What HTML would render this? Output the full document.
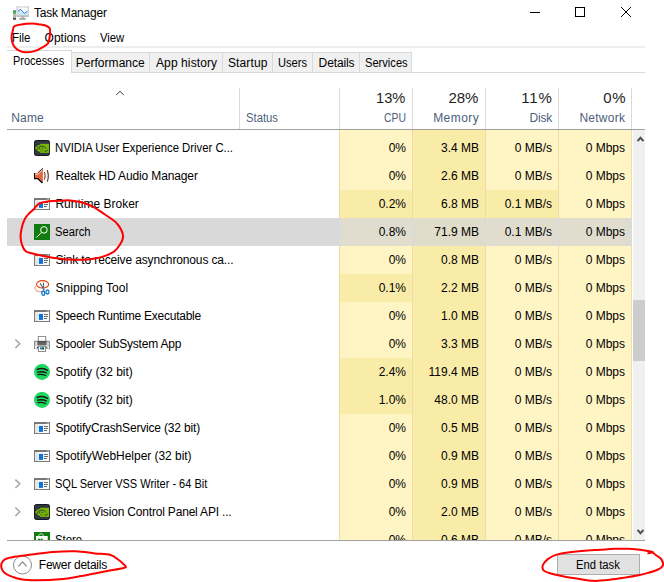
<!DOCTYPE html>
<html><head><meta charset="utf-8"><style>
html,body{margin:0;padding:0;}
body{width:664px;height:582px;position:relative;overflow:hidden;background:#fff;font-family:"Liberation Sans", sans-serif;}
.t{position:absolute;white-space:nowrap;}
</style></head><body>
<svg style="position:absolute;left:0;top:0" width="34" height="24" viewBox="0 0 34 24">
<rect x="13" y="10.4" width="3" height="9.4" fill="#b8b8b8"/><rect x="13" y="10.4" width="3" height="1.3" fill="#6a6a8a"/><rect x="13" y="11.8" width="3" height="1.6" fill="#22c022"/><rect x="13" y="17.8" width="3" height="2" fill="#5a5a5a"/>
<rect x="16.4" y="6" width="12.4" height="10.6" fill="#cdcdcd"/><rect x="16.4" y="6" width="12.4" height="1" fill="#e0e0e0"/><rect x="16.4" y="15.6" width="12.4" height="1" fill="#a8a8a8"/>
<rect x="17.8" y="7.5" width="9.6" height="7.6" fill="#fff"/>
<path d="M17.8 11.4L20.5 9.2L22.5 11.5L24.3 13.5L27.4 11.2V15.1H17.8Z" fill="#c6ecfc"/>
<path d="M17.8 11.4L20.5 9.2L22.5 11.5L24.3 13.5L27.4 11.2" fill="none" stroke="#1f7ac8" stroke-width="1"/>
<rect x="21.5" y="16.5" width="2.8" height="1.6" fill="#b0b0b0"/><rect x="19.2" y="18" width="6.6" height="1.8" fill="#a8a8a8"/>
</svg>
<div class="t" style="left:34.00px;top:5px;font-size:12px;line-height:16px;color:#000;letter-spacing:-0.227px;">Task Manager</div>
<div style="position:absolute;left:530px;top:12px;width:10px;height:1px;background:#000"></div>
<div style="position:absolute;left:575px;top:7px;width:10px;height:10px;box-sizing:border-box;border:1px solid #000"></div>
<svg style="position:absolute;left:620px;top:6px" width="12" height="12" viewBox="0 0 12 12"><path d="M1 1L11 11M11 1L1 11" stroke="#000" stroke-width="1"/></svg>
<div class="t" style="left:11.64px;top:30px;font-size:12px;line-height:16px;color:#000;transform:scaleX(0.9556);transform-origin:0 0;">File</div>
<div class="t" style="left:44.60px;top:30px;font-size:12px;line-height:16px;color:#000;letter-spacing:-0.017px;">Options</div>
<div class="t" style="left:100.40px;top:30px;font-size:12px;line-height:16px;color:#000;transform:scaleX(0.9385);transform-origin:0 0;">View</div>
<div style="position:absolute;left:7px;top:46px;width:638px;height:2px;background:#eeeeee"></div>
<div style="position:absolute;left:7px;top:72px;width:638px;height:1px;background:#d9d9d9"></div>
<div style="position:absolute;left:71px;top:52px;width:79px;height:21px;box-sizing:border-box;background:#f0f0f0;border:1px solid #d9d9d9"></div>
<div class="t" style="left:75.70px;top:55px;font-size:12px;line-height:16px;color:#000;letter-spacing:0.040px;">Performance</div>
<div style="position:absolute;left:149px;top:52px;width:74px;height:21px;box-sizing:border-box;background:#f0f0f0;border:1px solid #d9d9d9"></div>
<div class="t" style="left:156.00px;top:55px;font-size:12px;line-height:16px;color:#000;letter-spacing:0.100px;">App history</div>
<div style="position:absolute;left:222px;top:52px;width:51px;height:21px;box-sizing:border-box;background:#f0f0f0;border:1px solid #d9d9d9"></div>
<div class="t" style="left:228.00px;top:55px;font-size:12px;line-height:16px;color:#000;letter-spacing:0.117px;">Startup</div>
<div style="position:absolute;left:272px;top:52px;width:41px;height:21px;box-sizing:border-box;background:#f0f0f0;border:1px solid #d9d9d9"></div>
<div class="t" style="left:278.27px;top:55px;font-size:12px;line-height:16px;color:#000;transform:scaleX(0.9267);transform-origin:0 0;">Users</div>
<div style="position:absolute;left:312px;top:52px;width:48px;height:21px;box-sizing:border-box;background:#f0f0f0;border:1px solid #d9d9d9"></div>
<div class="t" style="left:318.60px;top:55px;font-size:12px;line-height:16px;color:#000;letter-spacing:-0.117px;">Details</div>
<div style="position:absolute;left:359px;top:52px;width:53px;height:21px;box-sizing:border-box;background:#f0f0f0;border:1px solid #d9d9d9"></div>
<div class="t" style="left:365.07px;top:55px;font-size:12px;line-height:16px;color:#000;transform:scaleX(0.9267);transform-origin:0 0;">Services</div>
<div style="position:absolute;left:7px;top:50px;width:65px;height:23px;box-sizing:border-box;background:#fff;border-top:1px solid #d9d9d9;border-right:1px solid #d9d9d9"></div>
<div class="t" style="left:12.59px;top:53px;font-size:12px;line-height:16px;color:#000;transform:scaleX(0.9136);transform-origin:0 0;">Processes</div>
<svg style="position:absolute;left:115px;top:90px" width="10" height="7" viewBox="0 0 10 7"><path d="M1.2 5L5 1.3L8.8 5" fill="none" stroke="#3c3c3c" stroke-width="1"/></svg>
<div class="t" style="left:11.20px;top:110px;font-size:12px;line-height:16px;color:#4c607a;letter-spacing:0.200px;">Name</div>
<div style="position:absolute;left:239px;top:88px;width:1px;height:41px;background:#dadada"></div>
<div style="position:absolute;left:339px;top:88px;width:1px;height:41px;background:#dadada"></div>
<div style="position:absolute;left:412px;top:88px;width:1px;height:41px;background:#dadada"></div>
<div style="position:absolute;left:485px;top:88px;width:1px;height:41px;background:#dadada"></div>
<div style="position:absolute;left:558px;top:88px;width:1px;height:41px;background:#dadada"></div>
<div style="position:absolute;left:631px;top:88px;width:1px;height:41px;background:#dadada"></div>
<div class="t" style="left:245.66px;top:110px;font-size:12px;line-height:16px;color:#4c607a;transform:scaleX(0.9394);transform-origin:0 0;">Status</div>
<div class="t" style="left:375.92px;top:88px;font-size:15px;line-height:19px;color:#1e1e1e;transform:scaleX(0.9759);transform-origin:0 0;">13%</div>
<div class="t" style="left:383.60px;top:110px;font-size:12px;line-height:16px;color:#4c607a;transform:scaleX(0.8640);transform-origin:0 0;">CPU</div>
<div class="t" style="left:448.60px;top:88px;font-size:15px;line-height:19px;color:#1e1e1e;letter-spacing:-0.100px;">28%</div>
<div class="t" style="left:433.20px;top:110px;font-size:12px;line-height:16px;color:#4c607a;letter-spacing:0.440px;">Memory</div>
<div class="t" style="left:521.20px;top:88px;font-size:15px;line-height:19px;color:#1e1e1e;letter-spacing:0.900px;">11%</div>
<div class="t" style="left:529.40px;top:110px;font-size:12px;line-height:16px;color:#4c607a;letter-spacing:-0.133px;">Disk</div>
<div class="t" style="left:603.20px;top:88px;font-size:15px;line-height:19px;color:#1e1e1e;letter-spacing:0.700px;">0%</div>
<div class="t" style="left:579.40px;top:110px;font-size:12px;line-height:16px;color:#4c607a;letter-spacing:0.250px;">Network</div>
<div style="position:absolute;left:7px;top:129px;width:638px;height:1px;background:#a0a0a0"></div>
<div style="position:absolute;left:0;top:130px;width:664px;height:410px;overflow:hidden">
<div style="position:absolute;left:339px;top:0px;width:73px;height:4px;background:#fff4c4"></div>
<div style="position:absolute;left:412px;top:0px;width:73px;height:4px;background:#f9eca8"></div>
<div style="position:absolute;left:485px;top:0px;width:73px;height:4px;background:#fff4c4"></div>
<div style="position:absolute;left:558px;top:0px;width:73px;height:4px;background:#fff4c4"></div>
<div style="position:absolute;left:339px;top:4px;width:73px;height:28px;background:#fff4c4"></div>
<div style="position:absolute;left:412px;top:4px;width:73px;height:28px;background:#f9eca8"></div>
<div style="position:absolute;left:485px;top:4px;width:73px;height:28px;background:#fff4c4"></div>
<div style="position:absolute;left:558px;top:4px;width:73px;height:28px;background:#fff4c4"></div>
<div style="position:absolute;left:339px;top:32px;width:73px;height:28px;background:#fff4c4"></div>
<div style="position:absolute;left:412px;top:32px;width:73px;height:28px;background:#f9eca8"></div>
<div style="position:absolute;left:485px;top:32px;width:73px;height:28px;background:#fff4c4"></div>
<div style="position:absolute;left:558px;top:32px;width:73px;height:28px;background:#fff4c4"></div>
<div style="position:absolute;left:339px;top:60px;width:73px;height:28px;background:#f9eca8"></div>
<div style="position:absolute;left:412px;top:60px;width:73px;height:28px;background:#f9eca8"></div>
<div style="position:absolute;left:485px;top:60px;width:73px;height:28px;background:#f9eca8"></div>
<div style="position:absolute;left:558px;top:60px;width:73px;height:28px;background:#fff4c4"></div>
<div style="position:absolute;left:7px;top:88px;width:624px;height:28px;background:#d9d9d9"></div>
<div style="position:absolute;left:339px;top:88px;width:73px;height:28px;background:#e0ddcf"></div>
<div style="position:absolute;left:412px;top:88px;width:73px;height:28px;background:#dfdcc9"></div>
<div style="position:absolute;left:485px;top:88px;width:73px;height:28px;background:#e0ddcf"></div>
<div style="position:absolute;left:558px;top:88px;width:73px;height:28px;background:#e0ddcf"></div>
<div style="position:absolute;left:339px;top:116px;width:73px;height:28px;background:#fff4c4"></div>
<div style="position:absolute;left:412px;top:116px;width:73px;height:28px;background:#f9eca8"></div>
<div style="position:absolute;left:485px;top:116px;width:73px;height:28px;background:#fff4c4"></div>
<div style="position:absolute;left:558px;top:116px;width:73px;height:28px;background:#fff4c4"></div>
<div style="position:absolute;left:339px;top:144px;width:73px;height:28px;background:#f9eca8"></div>
<div style="position:absolute;left:412px;top:144px;width:73px;height:28px;background:#f9eca8"></div>
<div style="position:absolute;left:485px;top:144px;width:73px;height:28px;background:#fff4c4"></div>
<div style="position:absolute;left:558px;top:144px;width:73px;height:28px;background:#fff4c4"></div>
<div style="position:absolute;left:339px;top:172px;width:73px;height:28px;background:#fff4c4"></div>
<div style="position:absolute;left:412px;top:172px;width:73px;height:28px;background:#f9eca8"></div>
<div style="position:absolute;left:485px;top:172px;width:73px;height:28px;background:#fff4c4"></div>
<div style="position:absolute;left:558px;top:172px;width:73px;height:28px;background:#fff4c4"></div>
<div style="position:absolute;left:339px;top:200px;width:73px;height:28px;background:#fff4c4"></div>
<div style="position:absolute;left:412px;top:200px;width:73px;height:28px;background:#f9eca8"></div>
<div style="position:absolute;left:485px;top:200px;width:73px;height:28px;background:#fff4c4"></div>
<div style="position:absolute;left:558px;top:200px;width:73px;height:28px;background:#fff4c4"></div>
<div style="position:absolute;left:339px;top:228px;width:73px;height:28px;background:#f9eca8"></div>
<div style="position:absolute;left:412px;top:228px;width:73px;height:28px;background:#f9eca8"></div>
<div style="position:absolute;left:485px;top:228px;width:73px;height:28px;background:#fff4c4"></div>
<div style="position:absolute;left:558px;top:228px;width:73px;height:28px;background:#fff4c4"></div>
<div style="position:absolute;left:339px;top:256px;width:73px;height:28px;background:#f9eca8"></div>
<div style="position:absolute;left:412px;top:256px;width:73px;height:28px;background:#f9eca8"></div>
<div style="position:absolute;left:485px;top:256px;width:73px;height:28px;background:#fff4c4"></div>
<div style="position:absolute;left:558px;top:256px;width:73px;height:28px;background:#fff4c4"></div>
<div style="position:absolute;left:339px;top:284px;width:73px;height:28px;background:#fff4c4"></div>
<div style="position:absolute;left:412px;top:284px;width:73px;height:28px;background:#f9eca8"></div>
<div style="position:absolute;left:485px;top:284px;width:73px;height:28px;background:#fff4c4"></div>
<div style="position:absolute;left:558px;top:284px;width:73px;height:28px;background:#fff4c4"></div>
<div style="position:absolute;left:339px;top:312px;width:73px;height:28px;background:#fff4c4"></div>
<div style="position:absolute;left:412px;top:312px;width:73px;height:28px;background:#f9eca8"></div>
<div style="position:absolute;left:485px;top:312px;width:73px;height:28px;background:#fff4c4"></div>
<div style="position:absolute;left:558px;top:312px;width:73px;height:28px;background:#fff4c4"></div>
<div style="position:absolute;left:339px;top:340px;width:73px;height:28px;background:#fff4c4"></div>
<div style="position:absolute;left:412px;top:340px;width:73px;height:28px;background:#f9eca8"></div>
<div style="position:absolute;left:485px;top:340px;width:73px;height:28px;background:#fff4c4"></div>
<div style="position:absolute;left:558px;top:340px;width:73px;height:28px;background:#fff4c4"></div>
<div style="position:absolute;left:339px;top:368px;width:73px;height:28px;background:#fff4c4"></div>
<div style="position:absolute;left:412px;top:368px;width:73px;height:28px;background:#f9eca8"></div>
<div style="position:absolute;left:485px;top:368px;width:73px;height:28px;background:#fff4c4"></div>
<div style="position:absolute;left:558px;top:368px;width:73px;height:28px;background:#fff4c4"></div>
<div style="position:absolute;left:339px;top:396px;width:73px;height:28px;background:#fff4c4"></div>
<div style="position:absolute;left:412px;top:396px;width:73px;height:28px;background:#f9eca8"></div>
<div style="position:absolute;left:485px;top:396px;width:73px;height:28px;background:#fff4c4"></div>
<div style="position:absolute;left:558px;top:396px;width:73px;height:28px;background:#fff4c4"></div>
<div style="position:absolute;left:339px;top:0;width:1px;height:410px;background:#efdca4"></div>
<div style="position:absolute;left:412px;top:0;width:1px;height:410px;background:#efdca4"></div>
<div style="position:absolute;left:485px;top:0;width:1px;height:410px;background:#efdca4"></div>
<div style="position:absolute;left:558px;top:0;width:1px;height:410px;background:#efdca4"></div>
<div style="position:absolute;left:631px;top:0;width:1px;height:410px;background:#efdca4"></div>
<div style="position:absolute;left:339px;top:88px;width:1px;height:28px;background:#d6dbe3"></div>
<div style="position:absolute;left:412px;top:88px;width:1px;height:28px;background:#d6dbe3"></div>
<div style="position:absolute;left:485px;top:88px;width:1px;height:28px;background:#d6dbe3"></div>
<div style="position:absolute;left:558px;top:88px;width:1px;height:28px;background:#d6dbe3"></div>
<div style="position:absolute;left:631px;top:88px;width:1px;height:28px;background:#d6dbe3"></div>
<svg style="position:absolute;left:34px;top:10px" width="16" height="16" viewBox="0 0 16 16"><rect x="0.5" y="0.5" width="15" height="15" rx="1.8" fill="#2f3541" stroke="#15181d"/><path d="M6.1 3.8H15.1V12.9H6.1Z" fill="#76b900"/><path d="M1 8C2.5 6 4 5 6.1 4.7V12C4 11.4 2.3 10 1 8Z" fill="#76b900"/><path d="M3.3 9.8C3 7.5 5 6.3 7.5 6.2C10 6.2 11.8 7.2 12 8.6" fill="none" stroke="#2f3541" stroke-width="0.9"/><path d="M5.4 7.6V9.3" stroke="#2f3541" stroke-width="0.9"/><path d="M7.6 8.3H9.3" stroke="#2f3541" stroke-width="0.9"/><path d="M10.8 11.3C12 11.2 13.2 10.8 13.8 10.1" fill="none" stroke="#2f3541" stroke-width="1"/><path d="M6 10.6C7.5 11.2 9 11 10 10.3" fill="none" stroke="#2f3541" stroke-width="0.6" opacity="0.6"/></svg>
<div class="t" style="left:55.46px;top:10px;font-size:12px;line-height:16px;color:#000;transform:scaleX(0.9433);transform-origin:0 0;">NVIDIA User Experience Driver C...</div>
<div class="t" style="right:258px;top:10px;font-size:12px;line-height:16px;color:#000;">0%</div>
<div class="t" style="right:185px;top:10px;font-size:12px;line-height:16px;color:#000;">3.4 MB</div>
<div class="t" style="right:112px;top:10px;font-size:12px;line-height:16px;color:#000;">0 MB/s</div>
<div class="t" style="right:39px;top:10px;font-size:12px;line-height:16px;color:#000;">0 Mbps</div>
<svg style="position:absolute;left:34px;top:38px" width="16" height="16" viewBox="0 0 16 16"><path d="M0.3 4.9H3.8L8.9 0.2V15L3.8 10.6H0.3Z" fill="#e8643c"/><path d="M0.3 4.9V10.6H3.8L8.4 15" fill="none" stroke="#000" stroke-width="1.3"/><path d="M3.8 4.9L8.9 0.2" fill="none" stroke="#222" stroke-width="0.9"/><path d="M1 6.3H4L8.2 2.2" fill="none" stroke="#fff" stroke-width="0.9" opacity="0.9"/><path d="M10.5 4.2Q11.8 7.9 10.5 11.6" fill="none" stroke="#5a2a1a" stroke-width="1"/><path d="M13.3 2.3Q15.3 8 13.3 13.6" fill="none" stroke="#5a2a1a" stroke-width="1.1"/></svg>
<div class="t" style="left:55.40px;top:38px;font-size:12px;line-height:16px;color:#000;letter-spacing:-0.126px;">Realtek HD Audio Manager</div>
<div class="t" style="right:258px;top:38px;font-size:12px;line-height:16px;color:#000;">0%</div>
<div class="t" style="right:185px;top:38px;font-size:12px;line-height:16px;color:#000;">2.6 MB</div>
<div class="t" style="right:112px;top:38px;font-size:12px;line-height:16px;color:#000;">0 MB/s</div>
<div class="t" style="right:39px;top:38px;font-size:12px;line-height:16px;color:#000;">0 Mbps</div>
<svg style="position:absolute;left:34px;top:66px" width="16" height="16" viewBox="0 0 16 16"><rect x="0.5" y="2.5" width="15" height="11" fill="#fafafa" stroke="#7c7c7c"/><rect x="0" y="2" width="16" height="2" fill="#787878"/><rect x="12.5" y="2.6" width="1" height="1" fill="#ddd"/><rect x="14" y="2.6" width="1" height="1" fill="#ddd"/><rect x="1" y="4" width="3.2" height="9" fill="#e6e6e6"/><rect x="4.9" y="5.9" width="4.1" height="6" fill="#0a74d8"/><rect x="10" y="6" width="4" height="1" fill="#6a6a6a"/><rect x="10" y="8" width="4" height="1" fill="#6a6a6a"/><rect x="10" y="10" width="3" height="1" fill="#6a6a6a"/></svg>
<div class="t" style="left:55.40px;top:66px;font-size:12px;line-height:16px;color:#000;letter-spacing:0.008px;">Runtime Broker</div>
<div class="t" style="right:258px;top:66px;font-size:12px;line-height:16px;color:#000;">0.2%</div>
<div class="t" style="right:185px;top:66px;font-size:12px;line-height:16px;color:#000;">6.8 MB</div>
<div class="t" style="right:112px;top:66px;font-size:12px;line-height:16px;color:#000;">0.1 MB/s</div>
<div class="t" style="right:39px;top:66px;font-size:12px;line-height:16px;color:#000;">0 Mbps</div>
<svg style="position:absolute;left:34px;top:94px" width="16" height="16" viewBox="0 0 16 16"><rect x="-0.5" y="-0.5" width="17" height="17" fill="#ece4ec"/><rect x="0" y="0" width="16" height="16" fill="#107c10"/><circle cx="9.9" cy="5.9" r="3.3" fill="none" stroke="#fff" stroke-width="1"/><path d="M7.3 8.6L2.3 13.6" stroke="#fff" stroke-width="1"/></svg>
<div class="t" style="left:55.47px;top:94px;font-size:12px;line-height:16px;color:#000;transform:scaleX(0.9333);transform-origin:0 0;">Search</div>
<div class="t" style="right:258px;top:94px;font-size:12px;line-height:16px;color:#000;">0.8%</div>
<div class="t" style="right:185px;top:94px;font-size:12px;line-height:16px;color:#000;">71.9 MB</div>
<div class="t" style="right:112px;top:94px;font-size:12px;line-height:16px;color:#000;">0.1 MB/s</div>
<div class="t" style="right:39px;top:94px;font-size:12px;line-height:16px;color:#000;">0 Mbps</div>
<svg style="position:absolute;left:34px;top:122px" width="16" height="16" viewBox="0 0 16 16"><rect x="0.5" y="2.5" width="15" height="11" fill="#fafafa" stroke="#7c7c7c"/><rect x="0" y="2" width="16" height="2" fill="#787878"/><rect x="12.5" y="2.6" width="1" height="1" fill="#ddd"/><rect x="14" y="2.6" width="1" height="1" fill="#ddd"/><rect x="1" y="4" width="3.2" height="9" fill="#e6e6e6"/><rect x="4.9" y="5.9" width="4.1" height="6" fill="#0a74d8"/><rect x="10" y="6" width="4" height="1" fill="#6a6a6a"/><rect x="10" y="8" width="4" height="1" fill="#6a6a6a"/><rect x="10" y="10" width="3" height="1" fill="#6a6a6a"/></svg>
<div class="t" style="left:55.40px;top:122px;font-size:12px;line-height:16px;color:#000;letter-spacing:-0.139px;">Sink to receive asynchronous ca...</div>
<div class="t" style="right:258px;top:122px;font-size:12px;line-height:16px;color:#000;">0%</div>
<div class="t" style="right:185px;top:122px;font-size:12px;line-height:16px;color:#000;">0.8 MB</div>
<div class="t" style="right:112px;top:122px;font-size:12px;line-height:16px;color:#000;">0 MB/s</div>
<div class="t" style="right:39px;top:122px;font-size:12px;line-height:16px;color:#000;">0 Mbps</div>
<svg style="position:absolute;left:34px;top:150px" width="16" height="16" viewBox="0 0 16 16"><ellipse cx="8.6" cy="4.3" rx="6.1" ry="3.7" fill="none" stroke="#d84315" stroke-width="1.1"/><path d="M2.6 5.2C0.6 6.8 0.4 9.5 2.8 10.8C4.5 11.7 6.5 11.9 8.5 11.8" fill="none" stroke="#e57355" stroke-width="0.9"/><path d="M6.1 3.2L10.3 10" stroke="#555" stroke-width="1.1"/><path d="M9.5 2.5L9.6 10" stroke="#666" stroke-width="1.1"/><ellipse cx="9.3" cy="13.2" rx="1.5" ry="2.2" fill="none" stroke="#0b7dd0" stroke-width="1.3"/><ellipse cx="13.5" cy="12" rx="1.5" ry="2" fill="none" stroke="#0b7dd0" stroke-width="1.3"/></svg>
<div class="t" style="left:55.40px;top:150px;font-size:12px;line-height:16px;color:#000;letter-spacing:0.083px;">Snipping Tool</div>
<div class="t" style="right:258px;top:150px;font-size:12px;line-height:16px;color:#000;">0.1%</div>
<div class="t" style="right:185px;top:150px;font-size:12px;line-height:16px;color:#000;">2.2 MB</div>
<div class="t" style="right:112px;top:150px;font-size:12px;line-height:16px;color:#000;">0 MB/s</div>
<div class="t" style="right:39px;top:150px;font-size:12px;line-height:16px;color:#000;">0 Mbps</div>
<svg style="position:absolute;left:34px;top:178px" width="16" height="16" viewBox="0 0 16 16"><rect x="0.5" y="2.5" width="15" height="11" fill="#fafafa" stroke="#7c7c7c"/><rect x="0" y="2" width="16" height="2" fill="#787878"/><rect x="12.5" y="2.6" width="1" height="1" fill="#ddd"/><rect x="14" y="2.6" width="1" height="1" fill="#ddd"/><rect x="1" y="4" width="3.2" height="9" fill="#e6e6e6"/><rect x="4.9" y="5.9" width="4.1" height="6" fill="#0a74d8"/><rect x="10" y="6" width="4" height="1" fill="#6a6a6a"/><rect x="10" y="8" width="4" height="1" fill="#6a6a6a"/><rect x="10" y="10" width="3" height="1" fill="#6a6a6a"/></svg>
<div class="t" style="left:55.40px;top:178px;font-size:12px;line-height:16px;color:#000;letter-spacing:-0.233px;">Speech Runtime Executable</div>
<div class="t" style="right:258px;top:178px;font-size:12px;line-height:16px;color:#000;">0%</div>
<div class="t" style="right:185px;top:178px;font-size:12px;line-height:16px;color:#000;">1.0 MB</div>
<div class="t" style="right:112px;top:178px;font-size:12px;line-height:16px;color:#000;">0 MB/s</div>
<div class="t" style="right:39px;top:178px;font-size:12px;line-height:16px;color:#000;">0 Mbps</div>
<svg style="position:absolute;left:14px;top:209px" width="8" height="10" viewBox="0 0 8 10"><path d="M1.4 0.6L5.8 4.8L1.4 9" fill="none" stroke="#a6a6a6" stroke-width="1.5"/></svg>
<svg style="position:absolute;left:34px;top:206px" width="16" height="16" viewBox="0 0 16 16"><rect x="4.3" y="0.4" width="7.4" height="5" fill="#fff" stroke="#8a8a8a"/><rect x="0.5" y="5.3" width="15" height="7.3" fill="#cfd3da" stroke="#8a8a8a"/><rect x="3.5" y="5" width="9" height="4.6" fill="#666"/><rect x="3.5" y="5" width="9" height="1.5" fill="#555"/><rect x="1" y="9.5" width="14" height="1" fill="#dde1e8"/><rect x="1" y="10.5" width="14" height="2" fill="#fff"/><rect x="3" y="10.8" width="1" height="1.4" fill="#222"/><rect x="12.3" y="10.8" width="1" height="1.4" fill="#222"/><rect x="13.8" y="9" width="1.2" height="1" fill="#7fd87f"/><rect x="4.4" y="10.4" width="7.2" height="5.1" fill="#fff" stroke="#8a8a8a"/><rect x="6" y="11.3" width="2" height="2.2" fill="#1a8ad8"/><rect x="8" y="11.3" width="2.2" height="2.2" fill="#1a5a3a"/></svg>
<div class="t" style="left:55.40px;top:206px;font-size:12px;line-height:16px;color:#000;letter-spacing:-0.205px;">Spooler SubSystem App</div>
<div class="t" style="right:258px;top:206px;font-size:12px;line-height:16px;color:#000;">0%</div>
<div class="t" style="right:185px;top:206px;font-size:12px;line-height:16px;color:#000;">3.3 MB</div>
<div class="t" style="right:112px;top:206px;font-size:12px;line-height:16px;color:#000;">0 MB/s</div>
<div class="t" style="right:39px;top:206px;font-size:12px;line-height:16px;color:#000;">0 Mbps</div>
<svg style="position:absolute;left:34px;top:234px" width="16" height="16" viewBox="0 0 16 16"><circle cx="8" cy="7.9" r="8" fill="#1ed760"/><path d="M3.2 5.4C6.5 4.3 10.8 4.6 13.4 6.3" fill="none" stroke="#191414" stroke-width="1.5" stroke-linecap="round"/><path d="M3.6 8.2C6.5 7.5 10 7.8 12.5 9" fill="none" stroke="#191414" stroke-width="1.3" stroke-linecap="round"/><path d="M3.8 10.6C6.4 10.2 9.2 10.5 11.6 11.5" fill="none" stroke="#191414" stroke-width="1.1" stroke-linecap="round"/></svg>
<div class="t" style="left:55.40px;top:234px;font-size:12px;line-height:16px;color:#000;letter-spacing:0.007px;">Spotify (32 bit)</div>
<div class="t" style="right:258px;top:234px;font-size:12px;line-height:16px;color:#000;">2.4%</div>
<div class="t" style="right:185px;top:234px;font-size:12px;line-height:16px;color:#000;">119.4 MB</div>
<div class="t" style="right:112px;top:234px;font-size:12px;line-height:16px;color:#000;">0 MB/s</div>
<div class="t" style="right:39px;top:234px;font-size:12px;line-height:16px;color:#000;">0 Mbps</div>
<svg style="position:absolute;left:34px;top:262px" width="16" height="16" viewBox="0 0 16 16"><circle cx="8" cy="7.9" r="8" fill="#1ed760"/><path d="M3.2 5.4C6.5 4.3 10.8 4.6 13.4 6.3" fill="none" stroke="#191414" stroke-width="1.5" stroke-linecap="round"/><path d="M3.6 8.2C6.5 7.5 10 7.8 12.5 9" fill="none" stroke="#191414" stroke-width="1.3" stroke-linecap="round"/><path d="M3.8 10.6C6.4 10.2 9.2 10.5 11.6 11.5" fill="none" stroke="#191414" stroke-width="1.1" stroke-linecap="round"/></svg>
<div class="t" style="left:55.40px;top:262px;font-size:12px;line-height:16px;color:#000;letter-spacing:0.007px;">Spotify (32 bit)</div>
<div class="t" style="right:258px;top:262px;font-size:12px;line-height:16px;color:#000;">1.0%</div>
<div class="t" style="right:185px;top:262px;font-size:12px;line-height:16px;color:#000;">48.0 MB</div>
<div class="t" style="right:112px;top:262px;font-size:12px;line-height:16px;color:#000;">0 MB/s</div>
<div class="t" style="right:39px;top:262px;font-size:12px;line-height:16px;color:#000;">0 Mbps</div>
<svg style="position:absolute;left:34px;top:290px" width="16" height="16" viewBox="0 0 16 16"><rect x="0.5" y="2.5" width="15" height="11" fill="#fafafa" stroke="#7c7c7c"/><rect x="0" y="2" width="16" height="2" fill="#787878"/><rect x="12.5" y="2.6" width="1" height="1" fill="#ddd"/><rect x="14" y="2.6" width="1" height="1" fill="#ddd"/><rect x="1" y="4" width="3.2" height="9" fill="#e6e6e6"/><rect x="4.9" y="5.9" width="4.1" height="6" fill="#0a74d8"/><rect x="10" y="6" width="4" height="1" fill="#6a6a6a"/><rect x="10" y="8" width="4" height="1" fill="#6a6a6a"/><rect x="10" y="10" width="3" height="1" fill="#6a6a6a"/></svg>
<div class="t" style="left:55.40px;top:290px;font-size:12px;line-height:16px;color:#000;letter-spacing:-0.170px;">SpotifyCrashService (32 bit)</div>
<div class="t" style="right:258px;top:290px;font-size:12px;line-height:16px;color:#000;">0%</div>
<div class="t" style="right:185px;top:290px;font-size:12px;line-height:16px;color:#000;">0.5 MB</div>
<div class="t" style="right:112px;top:290px;font-size:12px;line-height:16px;color:#000;">0 MB/s</div>
<div class="t" style="right:39px;top:290px;font-size:12px;line-height:16px;color:#000;">0 Mbps</div>
<svg style="position:absolute;left:34px;top:318px" width="16" height="16" viewBox="0 0 16 16"><rect x="0.5" y="2.5" width="15" height="11" fill="#fafafa" stroke="#7c7c7c"/><rect x="0" y="2" width="16" height="2" fill="#787878"/><rect x="12.5" y="2.6" width="1" height="1" fill="#ddd"/><rect x="14" y="2.6" width="1" height="1" fill="#ddd"/><rect x="1" y="4" width="3.2" height="9" fill="#e6e6e6"/><rect x="4.9" y="5.9" width="4.1" height="6" fill="#0a74d8"/><rect x="10" y="6" width="4" height="1" fill="#6a6a6a"/><rect x="10" y="8" width="4" height="1" fill="#6a6a6a"/><rect x="10" y="10" width="3" height="1" fill="#6a6a6a"/></svg>
<div class="t" style="left:55.40px;top:318px;font-size:12px;line-height:16px;color:#000;letter-spacing:-0.042px;">SpotifyWebHelper (32 bit)</div>
<div class="t" style="right:258px;top:318px;font-size:12px;line-height:16px;color:#000;">0%</div>
<div class="t" style="right:185px;top:318px;font-size:12px;line-height:16px;color:#000;">0.9 MB</div>
<div class="t" style="right:112px;top:318px;font-size:12px;line-height:16px;color:#000;">0 MB/s</div>
<div class="t" style="right:39px;top:318px;font-size:12px;line-height:16px;color:#000;">0 Mbps</div>
<svg style="position:absolute;left:14px;top:349px" width="8" height="10" viewBox="0 0 8 10"><path d="M1.4 0.6L5.8 4.8L1.4 9" fill="none" stroke="#a6a6a6" stroke-width="1.5"/></svg>
<svg style="position:absolute;left:34px;top:346px" width="16" height="16" viewBox="0 0 16 16"><rect x="0.5" y="2.5" width="15" height="11" fill="#fafafa" stroke="#7c7c7c"/><rect x="0" y="2" width="16" height="2" fill="#787878"/><rect x="12.5" y="2.6" width="1" height="1" fill="#ddd"/><rect x="14" y="2.6" width="1" height="1" fill="#ddd"/><rect x="1" y="4" width="3.2" height="9" fill="#e6e6e6"/><rect x="4.9" y="5.9" width="4.1" height="6" fill="#0a74d8"/><rect x="10" y="6" width="4" height="1" fill="#6a6a6a"/><rect x="10" y="8" width="4" height="1" fill="#6a6a6a"/><rect x="10" y="10" width="3" height="1" fill="#6a6a6a"/></svg>
<div class="t" style="left:55.48px;top:346px;font-size:12px;line-height:16px;color:#000;transform:scaleX(0.9169);transform-origin:0 0;">SQL Server VSS Writer - 64 Bit</div>
<div class="t" style="right:258px;top:346px;font-size:12px;line-height:16px;color:#000;">0%</div>
<div class="t" style="right:185px;top:346px;font-size:12px;line-height:16px;color:#000;">0.9 MB</div>
<div class="t" style="right:112px;top:346px;font-size:12px;line-height:16px;color:#000;">0 MB/s</div>
<div class="t" style="right:39px;top:346px;font-size:12px;line-height:16px;color:#000;">0 Mbps</div>
<svg style="position:absolute;left:14px;top:377px" width="8" height="10" viewBox="0 0 8 10"><path d="M1.4 0.6L5.8 4.8L1.4 9" fill="none" stroke="#a6a6a6" stroke-width="1.5"/></svg>
<svg style="position:absolute;left:34px;top:374px" width="16" height="16" viewBox="0 0 16 16"><rect x="0.5" y="0.5" width="15" height="15" rx="1.8" fill="#2f3541" stroke="#15181d"/><path d="M6.1 3.8H15.1V12.9H6.1Z" fill="#76b900"/><path d="M1 8C2.5 6 4 5 6.1 4.7V12C4 11.4 2.3 10 1 8Z" fill="#76b900"/><path d="M3.3 9.8C3 7.5 5 6.3 7.5 6.2C10 6.2 11.8 7.2 12 8.6" fill="none" stroke="#2f3541" stroke-width="0.9"/><path d="M5.4 7.6V9.3" stroke="#2f3541" stroke-width="0.9"/><path d="M7.6 8.3H9.3" stroke="#2f3541" stroke-width="0.9"/><path d="M10.8 11.3C12 11.2 13.2 10.8 13.8 10.1" fill="none" stroke="#2f3541" stroke-width="1"/><path d="M6 10.6C7.5 11.2 9 11 10 10.3" fill="none" stroke="#2f3541" stroke-width="0.6" opacity="0.6"/></svg>
<div class="t" style="left:55.40px;top:374px;font-size:12px;line-height:16px;color:#000;letter-spacing:-0.185px;">Stereo Vision Control Panel API ...</div>
<div class="t" style="right:258px;top:374px;font-size:12px;line-height:16px;color:#000;">0%</div>
<div class="t" style="right:185px;top:374px;font-size:12px;line-height:16px;color:#000;">2.0 MB</div>
<div class="t" style="right:112px;top:374px;font-size:12px;line-height:16px;color:#000;">0 MB/s</div>
<div class="t" style="right:39px;top:374px;font-size:12px;line-height:16px;color:#000;">0 Mbps</div>
<svg style="position:absolute;left:34px;top:402px" width="16" height="16" viewBox="0 0 16 16"><rect x="0" y="0" width="16" height="16" fill="#107c10"/><rect x="2" y="4" width="11.7" height="10" fill="#fff"/><path d="M4.5 4.2C4.5 1 9.5 1 9.5 4.2" fill="none" stroke="#cfe5cf" stroke-width="1"/><rect x="4" y="6.7" width="2.2" height="2" fill="#107c10"/><rect x="6.6" y="6.7" width="2.2" height="2" fill="#107c10"/></svg>
<div class="t" style="left:55.45px;top:402px;font-size:12px;line-height:16px;color:#000;transform:scaleX(0.9481);transform-origin:0 0;">Store</div>
<div class="t" style="right:258px;top:402px;font-size:12px;line-height:16px;color:#000;">0%</div>
<div class="t" style="right:185px;top:402px;font-size:12px;line-height:16px;color:#000;">0.6 MB</div>
<div class="t" style="right:112px;top:402px;font-size:12px;line-height:16px;color:#000;">0 MB/s</div>
<div class="t" style="right:39px;top:402px;font-size:12px;line-height:16px;color:#000;">0 Mbps</div>
<div style="position:absolute;left:632px;top:0;width:1px;height:410px;background:#fff"></div>
<div style="position:absolute;left:633px;top:0;width:12px;height:410px;background:#f0f0f0"></div>
<div style="position:absolute;left:633px;top:170px;width:12px;height:61px;background:#cdcdcd"></div>
<svg style="position:absolute;left:633px;top:4px" width="12" height="10" viewBox="0 0 12 10"><path d="M4.5 7.2L7.5 3.8L10.5 7.2" fill="none" stroke="#505050" stroke-width="2"/></svg>
<svg style="position:absolute;left:633px;top:397px" width="12" height="10" viewBox="0 0 12 10"><path d="M4.5 2.8L7.5 6.2L10.5 2.8" fill="none" stroke="#505050" stroke-width="2"/></svg>
</div>
<div style="position:absolute;left:7px;top:540px;width:638px;height:1px;background:#a0a0a0"></div>
<svg style="position:absolute;left:12px;top:555px" width="21" height="20" viewBox="0 0 21 20"><circle cx="10.5" cy="10" r="9" fill="none" stroke="#8c8c8c" stroke-width="1"/><path d="M6.4 11.4L10.5 6.9L14.6 11.4" fill="none" stroke="#8c8c8c" stroke-width="1.3"/></svg>
<div class="t" style="left:38.80px;top:557px;font-size:12px;line-height:16px;color:#000;letter-spacing:-0.250px;">Fewer details</div>
<div style="position:absolute;left:557px;top:554px;width:83px;height:21px;box-sizing:border-box;background:#e1e1e1;border:1px solid #adadad"></div>
<div class="t" style="left:575.76px;top:557px;font-size:12px;line-height:16px;color:#000;transform:scaleX(0.9370);transform-origin:0 0;">End task</div>
<svg style="position:absolute;left:0;top:0" width="664" height="582" viewBox="0 0 664 582"><g fill="none" stroke="#ff0000" stroke-width="2" stroke-linecap="round" stroke-linejoin="round">
<path d="M14.3 26.3C15.7 25.2 18.1 24.8 21.1 24.4C24.1 23.9 29.3 23.6 32.4 23.6C35.5 23.6 37.7 24.1 39.9 24.4C42.1 24.7 43.9 24.9 45.5 25.5C47.1 26.1 49.0 26.9 49.7 28.2C50.5 29.5 50.1 31.3 50.0 33.1C49.9 34.9 49.7 37.4 49.3 39.1C48.9 40.9 49.0 42.2 47.8 43.6C46.6 45.0 44.3 46.5 42.1 47.7C39.9 49.0 37.5 50.3 34.6 51.1C31.7 51.9 27.4 52.4 24.8 52.3C22.2 52.2 20.6 51.3 18.8 50.4C17.1 49.5 15.4 48.1 14.3 46.6C13.2 45.1 12.4 43.0 12.0 41.3C11.6 39.5 11.5 37.9 11.6 36.1C11.7 34.4 12.4 32.4 12.8 30.8C13.2 29.2 12.9 27.4 14.3 26.3Z"/>
<path d="M49.0 201.2C52.5 200.8 57.2 200.9 60.7 200.8C64.2 200.7 66.5 200.2 70.0 200.4C73.5 200.6 77.8 201.1 81.7 202.2C85.6 203.3 89.6 204.9 93.3 206.8C97.0 208.7 101.0 211.9 103.9 213.8C106.8 215.8 108.8 216.9 110.9 218.5C113.0 220.1 115.0 221.2 116.7 223.2C118.5 225.1 120.3 227.9 121.4 230.2C122.5 232.5 123.3 234.9 123.1 237.2C122.9 239.5 121.7 241.9 120.2 244.2C118.8 246.5 116.9 249.2 114.4 251.2C111.9 253.1 108.5 254.6 105.0 255.9C101.5 257.2 97.2 258.2 93.3 258.8C89.4 259.4 85.6 259.7 81.7 259.8C77.8 259.9 73.5 259.8 70.0 259.6C66.5 259.4 65.2 259.4 60.7 258.8C56.2 258.2 47.9 256.8 43.2 255.9C38.5 255.0 35.6 254.3 32.7 253.5C29.8 252.7 27.4 252.5 25.7 251.2C23.9 249.8 23.0 247.7 22.2 245.4C21.4 243.1 20.7 240.3 20.6 237.5C20.5 234.7 20.9 231.6 21.6 228.5C22.3 225.4 23.5 221.5 24.8 219.0C26.1 216.5 27.7 214.9 29.2 213.3C30.7 211.7 32.7 210.3 33.8 209.2C34.9 208.1 34.6 207.8 35.6 206.8C36.6 205.8 37.5 204.2 39.7 203.3C41.9 202.4 45.5 201.6 49.0 201.2Z"/>
<path d="M1.6 563.4C2.2 561.9 2.9 560.3 5.3 559.2C7.7 558.1 11.4 557.4 15.8 556.6C20.2 555.8 25.4 555.3 31.6 554.5C37.8 553.7 45.3 552.4 52.7 551.9C60.1 551.4 68.8 551.0 75.8 551.3C82.8 551.5 89.0 552.8 94.8 553.4C100.6 554.0 106.6 553.9 110.6 555.0C114.6 556.1 116.9 558.8 119.0 560.3C121.1 561.8 122.1 562.9 123.3 564.0C124.5 565.1 126.4 566.3 125.9 567.1C125.4 567.9 124.0 567.9 120.1 568.7C116.1 569.5 108.7 570.7 102.2 571.9C95.7 573.1 88.1 574.9 81.1 576.1C74.1 577.3 67.4 578.6 60.0 579.3C52.6 580.0 43.4 580.3 36.9 580.3C30.4 580.3 25.4 580.0 21.0 579.3C16.6 578.6 13.3 577.2 10.5 576.1C7.7 575.0 5.7 573.7 4.2 572.4C2.7 571.1 2.0 569.7 1.6 568.2C1.2 566.7 1.0 564.9 1.6 563.4Z"/>
<path d="M542.5 567.9C542.3 566.9 542.5 566.0 543.0 564.9C543.5 563.8 544.5 562.5 545.5 561.4C546.5 560.3 547.2 559.5 548.9 558.4C550.6 557.3 552.8 555.9 555.9 554.9C559.0 553.9 562.5 553.1 567.8 552.4C573.1 551.7 582.3 550.9 587.7 550.5C593.1 550.1 595.5 550.1 600.0 549.8C604.5 549.5 609.7 549.0 614.5 548.8C619.3 548.6 624.6 548.6 628.9 548.8C633.2 549.0 636.8 549.3 640.5 549.8C644.2 550.3 648.5 550.8 651.1 551.7C653.7 552.6 654.3 554.0 655.9 555.1C657.5 556.2 659.5 557.1 660.7 558.5C661.9 559.9 662.9 561.9 663.1 563.3C663.3 564.7 662.7 566.0 661.7 567.1C660.7 568.2 659.1 569.0 656.9 570.0C654.6 571.0 651.2 572.0 648.2 572.9C645.2 573.8 642.6 574.5 638.6 575.3C634.6 576.1 628.9 577.0 624.1 577.7C619.3 578.4 613.6 579.2 609.6 579.7C605.6 580.2 602.8 580.4 600.0 580.6C597.2 580.8 596.4 581.1 592.7 580.8C589.0 580.5 582.8 579.5 577.8 578.8C572.8 578.0 567.5 577.2 562.9 576.3C558.2 575.4 553.0 574.2 549.9 573.3C546.8 572.4 545.2 571.7 544.0 570.8C542.8 569.9 542.7 568.9 542.5 567.9Z"/>
<path d="M651.1 551.7L653 552.2L648.2 553.2"/>
</g></svg>
</body></html>
